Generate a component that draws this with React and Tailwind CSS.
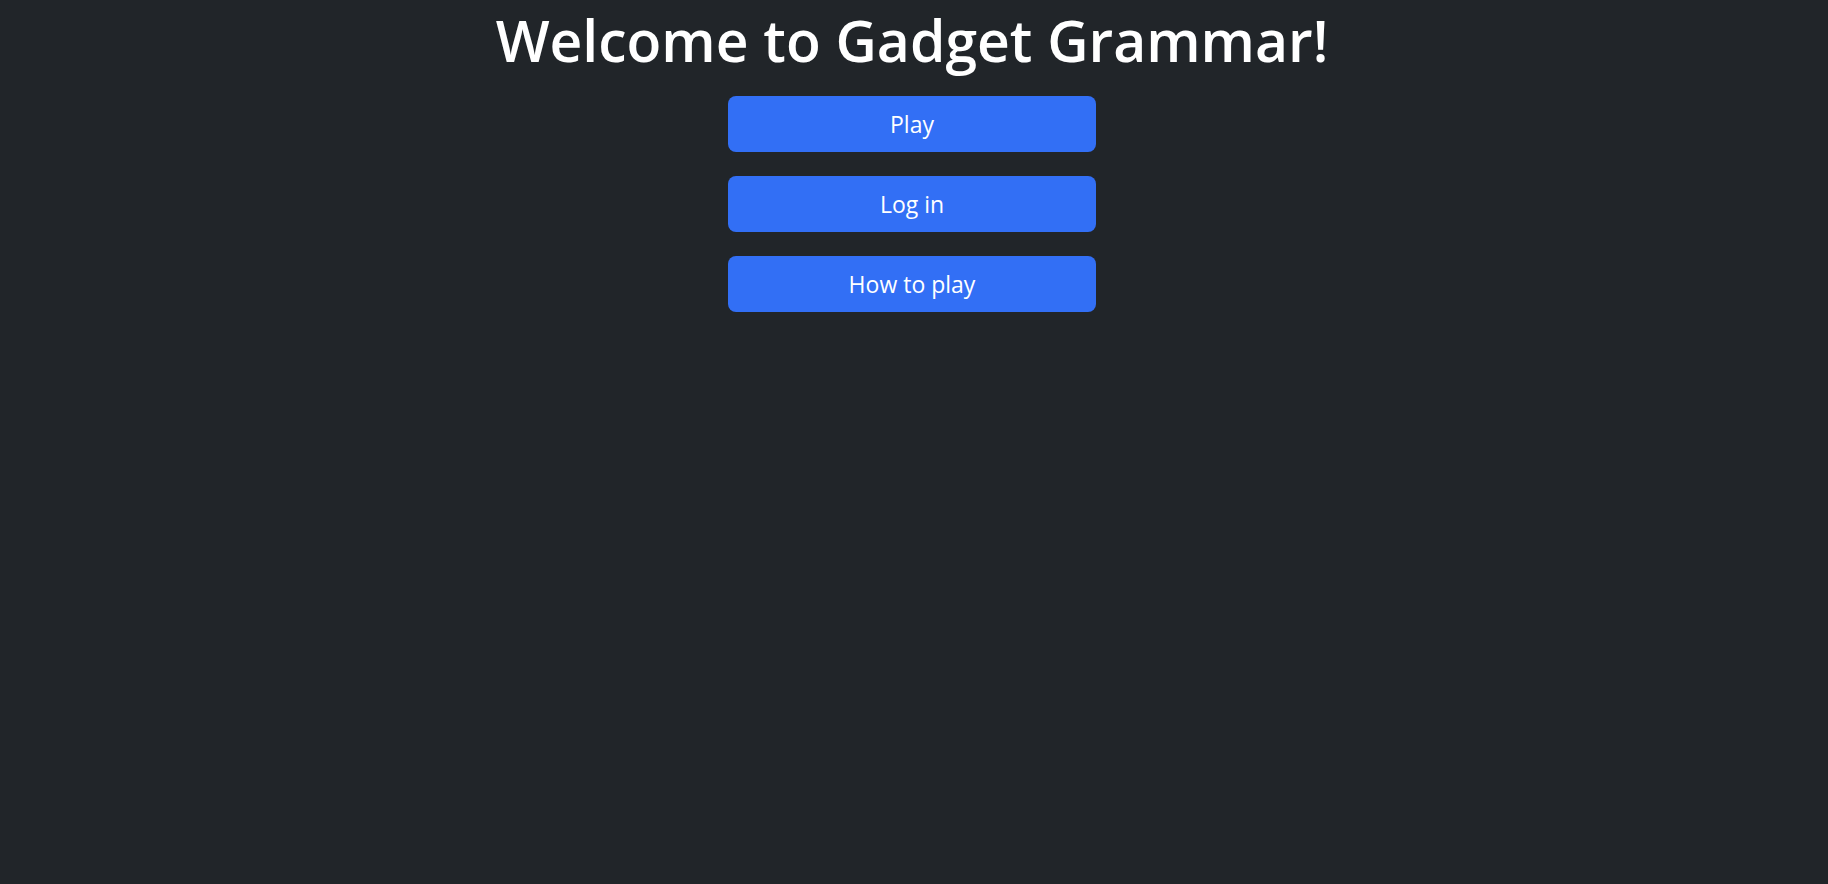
const buttons = ['Play', 'Log in', 'How to play'];

const App = () => {
  return (
    <div className="min-h-screen bg-[#212529] font-['Open_Sans',sans-serif] text-white">
      <div className="flex flex-col items-center pr-[4px]">
        <h1 className="text-[57px] font-semibold leading-[80px]">
          Welcome to Gadget Grammar!
        </h1>
        <div className="mt-[16px] flex flex-col gap-6">
          {buttons.map((label) => (
            <button
              key={label}
              className="h-[56px] w-[368px] rounded-lg bg-[#326ff5] text-[23px] text-white"
            >
              {label}
            </button>
          ))}
        </div>
      </div>
    </div>
  );
};

export default App;
